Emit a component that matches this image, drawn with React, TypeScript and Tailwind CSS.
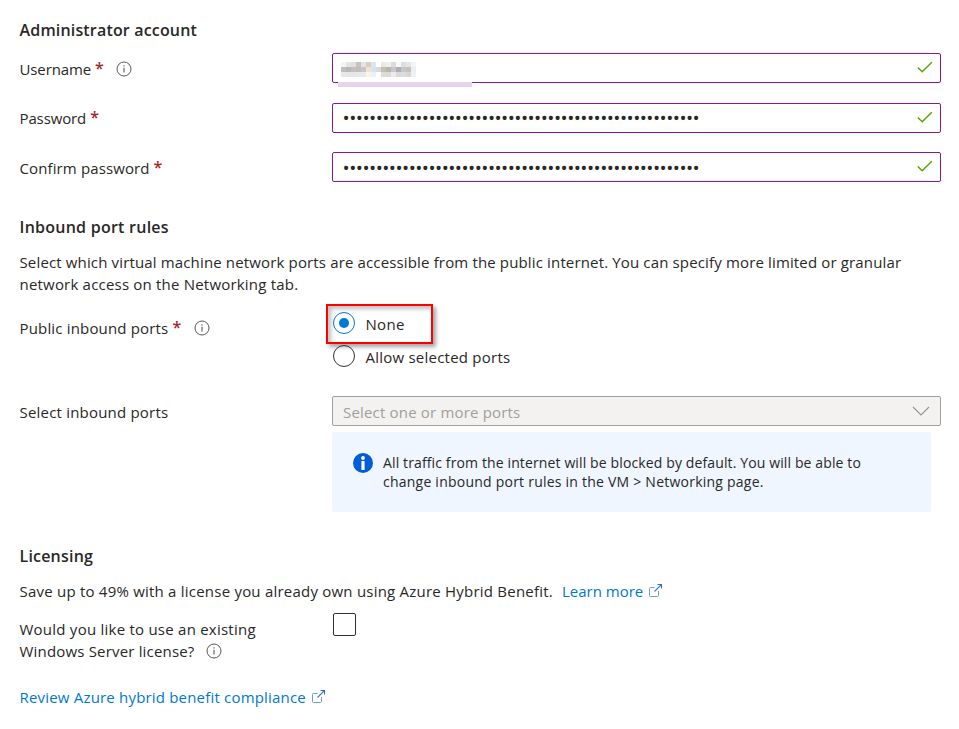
import type { ReactNode } from "react";

const DOTS = "•".repeat(54);

const REDACTED: string[] = [
  "#f4f4f2", "#e4e4e2", "#e0e0de", "#c6c2be", "#e2e4e8", "#dccdbe", "#dae6f0", "#ffffff", "#ece8e2", "#eef0f0", "#dcdce0", "#f8f8f8", "#dcdee2", "#e8e4e2", "#f2f4f6",
  "#c0bebc", "#b8b6b6", "#c2c0c0", "#c0bebe", "#c6c6c8", "#f2e2d2", "#d4e4f0", "#dadadc", "#c4beba", "#bab6aa", "#c8c8cc", "#b4acb0", "#c0c8d0", "#c4c2be", "#eceef2",
  "#e8e8e8", "#e6e6e6", "#e6e6e6", "#e8e8e8", "#e8e8e8", "#fcf2e8", "#e8f2fa", "#ffffff", "#dedcd8", "#dcdcd6", "#eaeaf0", "#dcd8da", "#dcdcde", "#d8d6d2", "#eef2f6",
];

function InfoIcon() {
  return (
    <svg className="block shrink-0" width="16" height="16" viewBox="0 0 16 16" fill="none">
      <circle cx="8" cy="8" r="7" stroke="#5a5856" strokeWidth="1" />
      <path d="M8 6.7V11.5M8 4.3V5.4" stroke="#5a5856" strokeWidth="1.1" />
    </svg>
  );
}

function ExternalIcon() {
  return (
    <svg className="mb-0.5 block shrink-0" width="14" height="14" viewBox="0 0 14 14" fill="none" stroke="#6a9ae6" strokeWidth="1">
      <path d="M5.5 4.5H1.5Q.5 4.5 .5 5.5V12.5Q.5 13.5 1.5 13.5H8.5Q9.5 13.5 9.5 12.5V8" />
      <path d="M5.5 8.5L12 2" strokeWidth="1.1" stroke="#3f7ade" />
      <path d="M8.5 1.5H12.5V5.5" stroke="#2f6bd6" />
      <path d="M10 1H13V4Z" fill="#2f6bd6" stroke="none" />
    </svg>
  );
}

function Star() {
  return <span className="mb-0.5 ml-1 w-[8.5px] text-[16px] font-semibold text-[#a4262c]">*</span>;
}

function Field({ label, info, children, className }: { label: ReactNode; info?: boolean; children: ReactNode; className: string }) {
  return (
    <div className={`flex h-[30px] items-start ${className}`}>
      <div className="flex h-[22px] w-[312.5px] items-center">
        {label}
        <Star />
        {info && <span className="ml-[12px]"><InfoIcon /></span>}
      </div>
      <div className="relative -mt-[var(--shift)] flex h-[30px] w-[609px] items-center justify-between rounded-[2px] border border-[#881798] pr-[7px] pl-[10px]">
        {children}
        <svg width="16" height="14" viewBox="0 0 16 14" fill="none" className="mb-0.5">
          <path d="M.8 7.5L5.2 11.8L14.8 2.2" stroke="#57a300" strokeWidth="1.4" />
        </svg>
      </div>
    </div>
  );
}

export default function App() {
  return (
    <div className="h-[729px] w-[959px] overflow-hidden bg-white pt-[19px] pl-[19.5px] font-['Open_Sans','Noto_Sans',sans-serif] text-[15px] leading-[22px] text-[#292827]">
      <h2 className="h-[22px] text-[16px] font-semibold"><span className="tracking-[0.17px]">Administrator account</span></h2>

      <Field label={<span className="tracking-[-0.12px]">Username</span>} info className="mt-[17px] [--shift:5px]">
        <div className="mt-[3px] -ml-0.5 grid grid-cols-[repeat(15,5px)] grid-rows-[repeat(3,5px)]">
          {REDACTED.map((c, i) => <span key={i} style={{ backgroundColor: c }} />)}
        </div>
        <span className="absolute top-[28px] left-[5px] h-[5px] w-[134px] bg-[#e6d4ec]" />
      </Field>
      <Field label={<span className="tracking-[-0.12px]">Password</span>} className="mt-[19px] [--shift:4px]">
        <span className="-ml-[0.4px] text-[19px] tracking-[-0.54px]">{DOTS}</span>
      </Field>
      <Field label={<span className="tracking-[0.12px]">Confirm password</span>} className="mt-[20px] [--shift:5px]">
        <span className="-ml-[0.4px] pt-0.5 text-[19px] tracking-[-0.54px]">{DOTS}</span>
      </Field>

      <h2 className="mt-[29px] h-[22px] text-[16px] font-semibold"><span className="tracking-[0.25px]">Inbound port rules</span></h2>
      <p className="mt-[13px] whitespace-nowrap">
        <span className="tracking-[0.148px]">Select which virtual machine network ports are accessible from the public internet. You can specify more limited or granular</span><br />
        <span className="tracking-[0.2px]">network access on the Networking tab.</span>
      </p>

      <div className="mt-[9px] flex h-[92px] items-start">
        <div className="mt-[13px] flex h-[22px] w-[306.5px] items-center">
          <span className="tracking-[0.17px]">Public inbound ports</span><Star />
          <span className="ml-[13px]"><InfoIcon /></span>
        </div>
        <div>
          <div className="flex h-10 w-[107px] items-start border-2 border-[#f00] pt-1.5 pl-[5px] shadow-[3px_3px_4px_rgba(0,0,0,0.35),inset_3px_3px_4px_rgba(0,0,0,0.25)]">
            <span className="flex size-[22px] items-center justify-center rounded-full border border-[#0078d4]">
              <span className="size-[10px] rounded-full bg-[#0078d4]" />
            </span>
            <span className="mt-px ml-[10.5px] tracking-[0.3px]">None</span>
          </div>
          <div className="mt-px flex items-start pl-[7px]">
            <span className="relative size-[22px] rounded-full border border-[#323130]" />
            <span className="mt-px ml-[10.5px] tracking-[0.23px]">Allow selected ports</span>
          </div>
        </div>
      </div>

      <div className="flex items-start">
        <div className="w-[312.5px] pt-[5px]"><span className="tracking-[0.2px]">Select inbound ports</span></div>
        <div>
          <div className="flex h-[30px] w-[609px] items-center justify-between rounded-[2px] border border-[#a19f9d] bg-[#f3f2f1] pr-[10px] pl-[10px] text-[#a19f9d]">
            <span className="pt-0.5 tracking-[0.18px]">Select one or more ports</span>
            <svg width="18" height="10" viewBox="0 0 18 10" fill="none"><path d="M1 1L9 9L17 1" stroke="#979593" strokeWidth="1.1" /></svg>
          </div>
          <div className="mt-1.5 flex h-20 w-[599px] items-start rounded-[2px] bg-[#eff6ff] pt-[21px] pl-[21px] text-[14px] leading-[19px]">
            <svg width="20" height="20" viewBox="0 0 20 20" className="shrink-0">
              <circle cx="10" cy="10" r="10" fill="#015cda" />
              <circle cx="10" cy="5" r="1.9" fill="#fff" />
              <path d="M8.4 8H11.6V17H8.4Z" fill="#fff" />
            </svg>
            <p className="ml-[10px] whitespace-nowrap">
              <span className="tracking-[0.125px]">All traffic from the internet will be blocked by default. You will be able to</span><br />
              <span className="tracking-[0.23px]">change inbound port rules in the VM &gt; Networking page.</span>
            </p>
          </div>
        </div>
      </div>

      <h2 className="mt-[33px] h-[22px] text-[16px] font-semibold"><span className="tracking-[0.2px]">Licensing</span></h2>
      <div className="mt-[13px] flex h-[22px] items-center">
        <span className="tracking-[0.22px]">Save up to 49% with a license you already own using Azure Hybrid Benefit.</span>
        <a className="ml-[9px] flex items-center text-[#0078d4]"><span>Learn more</span><span className="ml-1.5"><ExternalIcon /></span></a>
      </div>
      <div className="mt-[11px] flex items-start">
        <div className="w-[313.5px] pt-[5px]">
          <span className="tracking-[0.24px]">Would you like to use an existing</span>
          <div className="flex items-center"><span className="tracking-[0.18px]">Windows Server license?</span><span className="ml-[11px]"><InfoIcon /></span></div>
        </div>
        <span className="size-[23px] rounded-[2px] border border-[#323130]" />
      </div>
      <a className="mt-6 flex items-center text-[#0078d4]"><span className="tracking-[0.19px]">Review Azure hybrid benefit compliance</span><span className="ml-1.5"><ExternalIcon /></span></a>
    </div>
  );
}
